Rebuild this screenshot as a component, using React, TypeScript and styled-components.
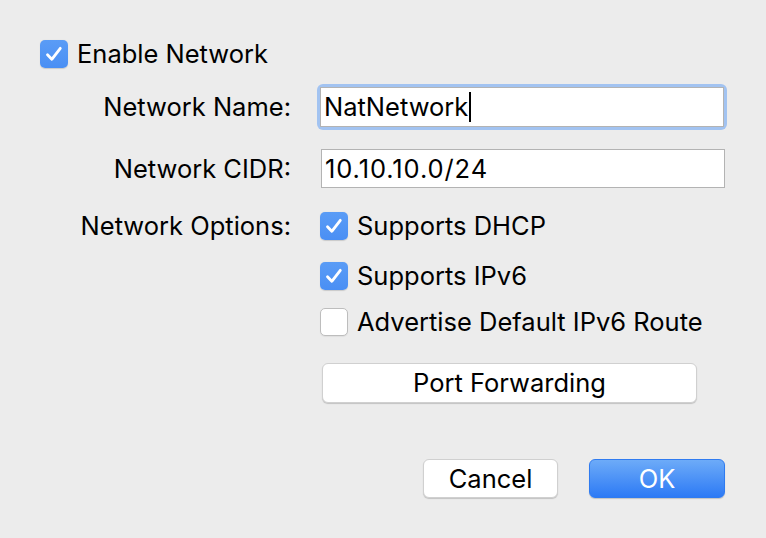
import React from "react";
import styled, { createGlobalStyle } from "styled-components";

const GlobalStyle = createGlobalStyle`
  html, body { margin: 0; padding: 0; background: #ececec; }
  body {
    font-family: Inter, "Liberation Sans", sans-serif;
    color: #000;
    -webkit-font-smoothing: antialiased;
  }
`;

const Dialog = styled.div`
  width: 766px;
  height: 538px;
  box-sizing: border-box;
  padding: 40px 41px 0 40px;
  display: flex;
  flex-direction: column;
  font-size: 25.5px;
`;

const CheckRow = styled.label<{ $mt?: number }>`
  display: flex;
  align-items: center;
  gap: 9px;
  height: 28px;
  line-height: 28px;
  margin-top: ${(p) => p.$mt ?? 0}px;
  white-space: nowrap;
`;

const Box = styled.span<{ $checked: boolean }>`
  flex: none;
  width: 28px;
  height: 28px;
  box-sizing: border-box;
  border-radius: 5px;
  display: flex;
  align-items: center;
  justify-content: center;
  background: ${(p) =>
    p.$checked ? "linear-gradient(#5a9cf6, #4a8ff4)" : "#ffffff"};
  border: ${(p) => (p.$checked ? "none" : "1px solid #bdbdbd")};
  box-shadow: ${(p) =>
    p.$checked ? "0 0.5px 1px rgba(0,0,0,0.15)" : "0 1px 1px rgba(0,0,0,0.06)"};
`;

const FormRow = styled.div<{ $mt: number; $align?: string }>`
  display: flex;
  align-items: ${(p) => p.$align ?? "center"};
  gap: 30px;
  margin-top: ${(p) => p.$mt}px;
`;

const Label = styled.div<{ $lh?: number; $shift?: number }>`
  width: 251px;
  flex: none;
  text-align: right;
  line-height: ${(p) => p.$lh ?? 40}px;
  white-space: nowrap;
`;

const FocusRing = styled.div`
  margin: -4px;
  padding: 3px;
  border-radius: 6px;
  background: #a2c3f1;
`;

const Field = styled.div<{ $h: number; $spacing?: number }>`
  width: 404px;
  height: ${(p) => p.$h}px;
  box-sizing: border-box;
  background: #fff;
  border: 1px solid #b3b3b3;
  padding: 0 3px;
  line-height: ${(p) => p.$h - 2}px;
  display: flex;
  align-items: center;
  white-space: nowrap;
  letter-spacing: ${(p) => p.$spacing ?? 0}px;
`;

const Caret = styled.span`
  display: inline-block;
  width: 2px;
  height: 30px;
  background: #000;
  margin-left: 1px;
`;

const Options = styled.div`
  display: flex;
  flex-direction: column;
  margin-left: -1px;
`;

const ButtonRow = styled.div`
  display: flex;
  margin-top: 27px;
  padding-left: 2px;
`;

const PushButton = styled.button<{ $w: number; $h: number; $primary?: boolean }>`
  width: ${(p) => p.$w}px;
  height: ${(p) => p.$h}px;
  box-sizing: border-box;
  font: inherit;
  font-size: 25.5px;
  padding: 0;
  border-radius: 6px;
  color: ${(p) => (p.$primary ? "#fff" : "#000")};
  background: ${(p) =>
    p.$primary ? "linear-gradient(#6dabf8, #2d7af5)" : "#ffffff"};
  border: ${(p) => (p.$primary ? "1px solid #2f7bf0" : "1px solid #d0d0d0")};
  box-shadow: 0 1px 1px rgba(0, 0, 0, 0.18);
  line-height: ${(p) => p.$h - 2}px;
`;

const Footer = styled.div`
  display: flex;
  justify-content: flex-end;
  gap: 31px;
  margin-top: 56px;
`;

const Check = () => (
  <svg width="28" height="28" viewBox="0 0 28 28">
    <path
      d="M7.5 14.8 L11.8 19.3 L20.3 8.3"
      fill="none"
      stroke="#fff"
      strokeWidth="2.8"
      strokeLinecap="round"
      strokeLinejoin="round"
    />
  </svg>
);

const CheckBox = ({
  checked,
  label,
  mt,
}: {
  checked: boolean;
  label: string;
  mt?: number;
}) => (
  <CheckRow $mt={mt}>
    <Box $checked={checked}>{checked && <Check />}</Box>
    <span>{label}</span>
  </CheckRow>
);

export default function App() {
  return (
    <>
      <GlobalStyle />
      <Dialog>
        <CheckBox checked label="Enable Network" />
        <FormRow $mt={19}>
          <Label>Network Name:</Label>
          <FocusRing>
            <Field $h={40}>
              NatNetwork
              <Caret />
            </Field>
          </FocusRing>
        </FormRow>
        <FormRow $mt={22}>
          <Label $lh={39}>Network CIDR:</Label>
          <Field $h={39} $spacing={0.9}>
            10.10.10.0/24
          </Field>
        </FormRow>
        <FormRow $mt={24} $align="flex-start">
          <Label $lh={28}>Network Options:</Label>
          <Options>
            <CheckBox checked label="Supports DHCP" />
            <CheckBox checked label="Supports IPv6" mt={22} />
            <CheckBox checked={false} label="Advertise Default IPv6 Route" mt={18} />
            <ButtonRow>
              <PushButton $w={375} $h={40}>Port Forwarding</PushButton>
            </ButtonRow>
          </Options>
        </FormRow>
        <Footer>
          <PushButton $w={135} $h={39}>Cancel</PushButton>
          <PushButton $w={136} $h={39} $primary>
            OK
          </PushButton>
        </Footer>
      </Dialog>
    </>
  );
}
